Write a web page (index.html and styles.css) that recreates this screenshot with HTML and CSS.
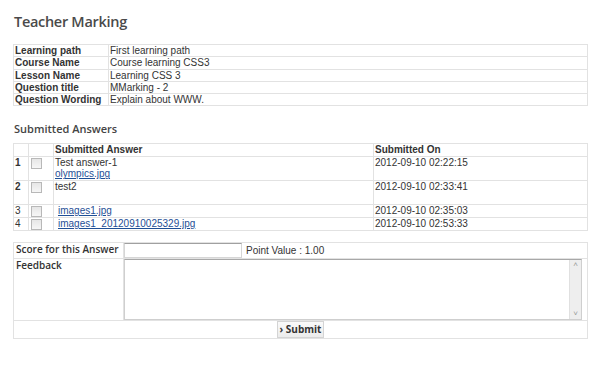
FILE: index.html
```html
<!DOCTYPE html>
<html lang="en">
<head>
  <meta charset="UTF-8">
  <title>Teacher Marking</title>
  <link rel="stylesheet" href="styles.css">
</head>
<body>
<div class="page">
  <h1 class="page-title">Teacher Marking</h1>

  <table class="info-table">
    <tr><th>Learning path</th><td>First learning path</td></tr>
    <tr><th>Course Name</th><td>Course learning CSS3</td></tr>
    <tr><th>Lesson Name</th><td>Learning CSS 3</td></tr>
    <tr><th>Question title</th><td>MMarking - 2</td></tr>
    <tr><th>Question Wording</th><td>Explain about WWW.</td></tr>
  </table>

  <h2 class="section-title">Submitted Answers</h2>

  <table class="answers-table">
    <tr class="head">
      <td class="num"></td>
      <td class="check"></td>
      <th class="answer">Submitted Answer</th>
      <th class="date">Submitted On</th>
    </tr>
    <tr>
      <td class="num bold">1</td>
      <td class="check"><span class="box"></span></td>
      <td class="answer">Test answer-1<br><a href="#">olympics.jpg</a></td>
      <td class="date">2012-09-10 02:22:15<br>&nbsp;</td>
    </tr>
    <tr>
      <td class="num bold">2</td>
      <td class="check"><span class="box"></span></td>
      <td class="answer">test2<br>&nbsp;</td>
      <td class="date">2012-09-10 02:33:41<br>&nbsp;</td>
    </tr>
    <tr>
      <td class="num">3</td>
      <td class="check"><span class="box"></span></td>
      <td class="answer"><a class="file" href="#">images1.jpg</a></td>
      <td class="date">2012-09-10 02:35:03</td>
    </tr>
    <tr>
      <td class="num">4</td>
      <td class="check"><span class="box"></span></td>
      <td class="answer"><a class="file" href="#">images1_20120910025329.jpg</a></td>
      <td class="date">2012-09-10 02:53:33</td>
    </tr>
  </table>

  <table class="score-table">
    <tr class="score-row">
      <th>Score for this Answer</th>
      <td><input type="text" class="score-input"><span class="point">Point Value : 1.00</span></td>
    </tr>
    <tr class="feedback-row">
      <th>Feedback</th>
      <td>
        <div class="feedback-box">
          <textarea class="feedback"></textarea>
          <div class="scrollbar"><span>&#x02C4;</span><span>&#x02C5;</span></div>
        </div>
      </td>
    </tr>
    <tr class="submit-row">
      <td colspan="2"><button type="button" class="submit">&rsaquo; Submit</button></td>
    </tr>
  </table>
</div>
</body>
</html>
```

FILE: styles.css
```css
body {
  margin: 0;
  background: #fff;
  color: #333;
  font-family: "Liberation Sans", Arial, sans-serif;
  font-size: 10px;
}
.page {
  width: 575px;
  padding: 11px 0 0 13px;
}
.page-title {
  margin: 0 0 12px 1px;
  font-family: "Open Sans", sans-serif;
  font-size: 14.5px;
  font-weight: 600;
  letter-spacing: -0.3px;
  line-height: 21px;
  color: #4a4a4a;
}
table {
  width: 575px;
  border-collapse: collapse;
  border: 1px solid #dcdcdc;
}
th, td {
  padding: 0 1px;
  text-align: left;
  vertical-align: top;
  border: 1px solid #e2e2e2;
}
.info-table th,
.info-table td {
  line-height: 11.3px;
}
.info-table th {
  width: 92px;
  font-weight: bold;
}
.section-title {
  margin: 16px 0 7px 1px;
  font-family: "Open Sans", sans-serif;
  font-size: 11px;
  font-weight: 600;
  line-height: 14px;
  color: #444;
}
.answers-table td,
.answers-table th {
  line-height: 11.5px;
}
.answers-table .num {
  width: 12px;
  padding-left: 1px;
}
.answers-table .check {
  width: 21px;
  padding-left: 2px;
}
.answers-table .answer {
  width: 317px;
  padding-left: 1px;
}
.bold {
  font-weight: bold;
}
.box {
  display: inline-block;
  width: 9px;
  height: 9px;
  margin-top: 1px;
  border: 1px solid #b8b8b8;
  background: linear-gradient(#e6e6e6, #f6f6f6);
  vertical-align: top;
}
a {
  color: #1f4f96;
}
.file {
  margin-left: 3px;
}
.score-table {
  margin-top: 11px;
}
.score-table th {
  width: 106px;
  padding: 0 1px 0 2px;
  font-family: "Open Sans", sans-serif;
  font-size: 10px;
  font-weight: 600;
  color: #333;
  line-height: 13px;
}
.score-row td {
  padding: 0;
  height: 15px;
}
.score-input {
  box-sizing: border-box;
  width: 118px;
  height: 15px;
  margin: 0;
  padding: 0;
  border: 1px solid #d6d6d6;
  border-top-color: #a0a0a0;
  vertical-align: top;
}
.point {
  margin-left: 4px;
  line-height: 15px;
}
.feedback-row td {
  padding: 0;
}
.feedback-box {
  display: flex;
  width: 456px;
  height: 59px;
  border: 1px solid #cfcfcf;
  border-top-color: #a8a8a8;
}
.feedback {
  flex: 1;
  margin: 0;
  padding: 0;
  border: none;
  resize: none;
  outline: none;
}
.scrollbar {
  display: flex;
  flex-direction: column;
  justify-content: space-between;
  width: 11px;
  background: #eeeeee;
  border-left: 1px solid #e0e0e0;
  color: #999;
  font-size: 8px;
  line-height: 10px;
  text-align: center;
}
.submit-row td {
  padding: 0;
  text-align: center;
  height: 17px;
}
.submit {
  margin: 0;
  padding: 0 2px;
  height: 17px;
  font-family: "Open Sans", sans-serif;
  font-size: 10px;
  font-weight: 700;
  color: #333;
  background: linear-gradient(#fafafa, #ececec);
  border: 1px solid #d4d4d4;
  cursor: pointer;
}
```
